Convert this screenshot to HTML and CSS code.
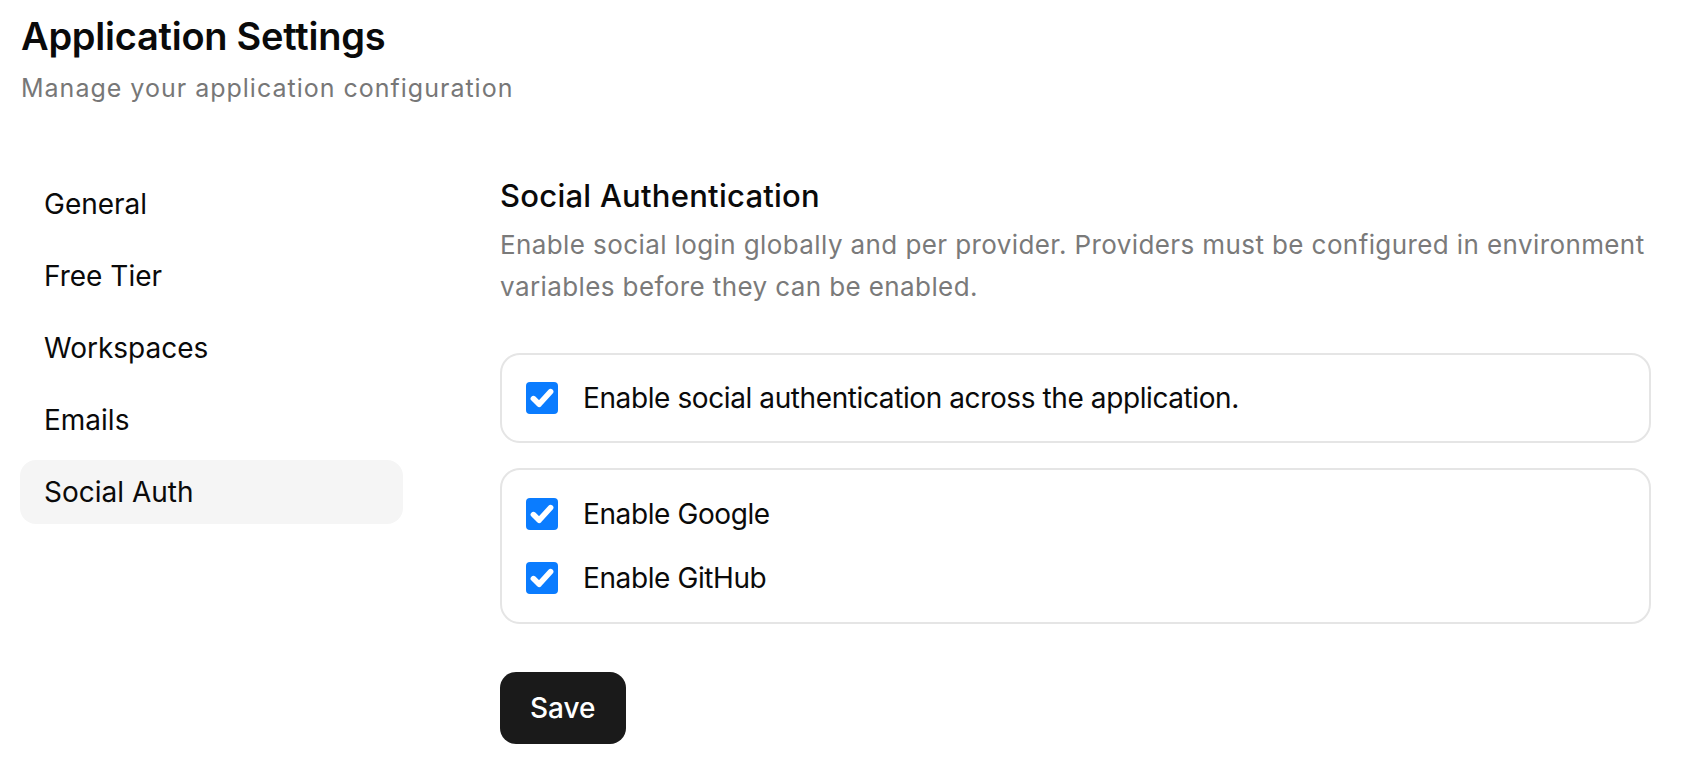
FILE: index.html
```html
<!DOCTYPE html>
<html lang="en">
<head>
<meta charset="utf-8">
<title>Application Settings</title>
<link rel="stylesheet" href="styles.css">
</head>
<body>
<div class="page">
  <header class="page-header">
    <h1 class="title">Application Settings</h1>
    <p class="subtitle">Manage your application configuration</p>
  </header>
  <div class="layout">
    <nav class="sidenav">
      <a class="nav-item">General</a>
      <a class="nav-item">Free Tier</a>
      <a class="nav-item">Workspaces</a>
      <a class="nav-item">Emails</a>
      <a class="nav-item active">Social Auth</a>
    </nav>
    <main class="content">
      <h2 class="section-title">Social Authentication</h2>
      <p class="section-desc">Enable social login globally and per provider. Providers must be configured in environment variables before they can be enabled.</p>
      <div class="card">
        <label class="check-row">
          <span class="checkbox"><svg viewBox="0 0 16 16"><path d="M3.7 8.3 L6.6 11.1 L12.3 4.8" /></svg></span>
          <span class="check-label">Enable social authentication across the application.</span>
        </label>
      </div>
      <div class="card card-list">
        <label class="check-row">
          <span class="checkbox"><svg viewBox="0 0 16 16"><path d="M3.7 8.3 L6.6 11.1 L12.3 4.8" /></svg></span>
          <span class="check-label">Enable Google</span>
        </label>
        <label class="check-row">
          <span class="checkbox"><svg viewBox="0 0 16 16"><path d="M3.7 8.3 L6.6 11.1 L12.3 4.8" /></svg></span>
          <span class="check-label">Enable GitHub</span>
        </label>
      </div>
      <button class="btn-save" type="button">Save</button>
    </main>
  </div>
</div>
</body>
</html>
```

FILE: styles.css
```css
* { box-sizing: border-box; }
html, body { margin: 0; padding: 0; background: #ffffff; }
body {
  font-family: Inter, "Noto Sans", "Liberation Sans", sans-serif;
  color: #0a0a0a;
}
.page { padding: 12px 20px 20px 20px; }
.page-header { display: flex; flex-direction: column; }
.title {
  margin: 0;
  font-size: 38px;
  line-height: 48px;
  font-weight: 600;
  letter-spacing: -0.25px;
  padding-left: 1px;
}
.subtitle {
  margin: 12px 0 0 0;
  font-size: 25px;
  line-height: 32px;
  letter-spacing: 1px;
  color: #777777;
  font-weight: 400;
  padding-left: 1px;
}
.layout {
  display: grid;
  grid-template-columns: 383px 1151px;
  column-gap: 97px;
  margin-top: 68px;
}
.sidenav { display: flex; flex-direction: column; gap: 8px; }
.nav-item {
  display: block;
  height: 64px;
  line-height: 64px;
  padding: 0 24px;
  font-size: 28px;
  font-weight: 400;
  color: #0a0a0a;
  border-radius: 16px;
}
.nav-item.active { background: #f5f5f5; }
.content { display: flex; flex-direction: column; align-items: flex-start; padding-top: 4px; }
.section-title {
  margin: 0;
  font-size: 31px;
  line-height: 40px;
  font-weight: 500;
  letter-spacing: 0.25px;
}
.section-desc {
  margin: 8px 0 0 0;
  font-size: 26px;
  line-height: 42px;
  letter-spacing: 0.4px;
  color: #7a7a7a;
}
.card {
  align-self: stretch;
  border: 2px solid #e5e5e5;
  border-radius: 20px;
  padding: 24px;
  margin-top: 45px;
  display: flex;
  flex-direction: column;
  gap: 26px;
}
.card-list { margin-top: 25px; padding: 25px 24px; }
.check-row {
  display: flex;
  align-items: center;
  gap: 25px;
  min-height: 38px;
}
.checkbox {
  flex: none;
  width: 32px;
  height: 32px;
  border-radius: 4px;
  background: #0a7cff;
  display: flex;
  align-items: center;
  justify-content: center;
}
.checkbox svg { width: 32px; height: 32px; }
.checkbox path {
  fill: none;
  stroke: #ffffff;
  stroke-width: 2.8;
  stroke-linecap: round;
  stroke-linejoin: round;
}
.check-label { font-size: 28px; line-height: 38px; letter-spacing: -0.4px; color: #0a0a0a; }
.btn-save {
  margin-top: 48px;
  height: 72px;
  padding: 0 30px;
  border: none;
  border-radius: 16px;
  background: #1a1a1a;
  color: #ffffff;
  font-family: inherit;
  font-size: 28px;
  font-weight: 500;
}
```
